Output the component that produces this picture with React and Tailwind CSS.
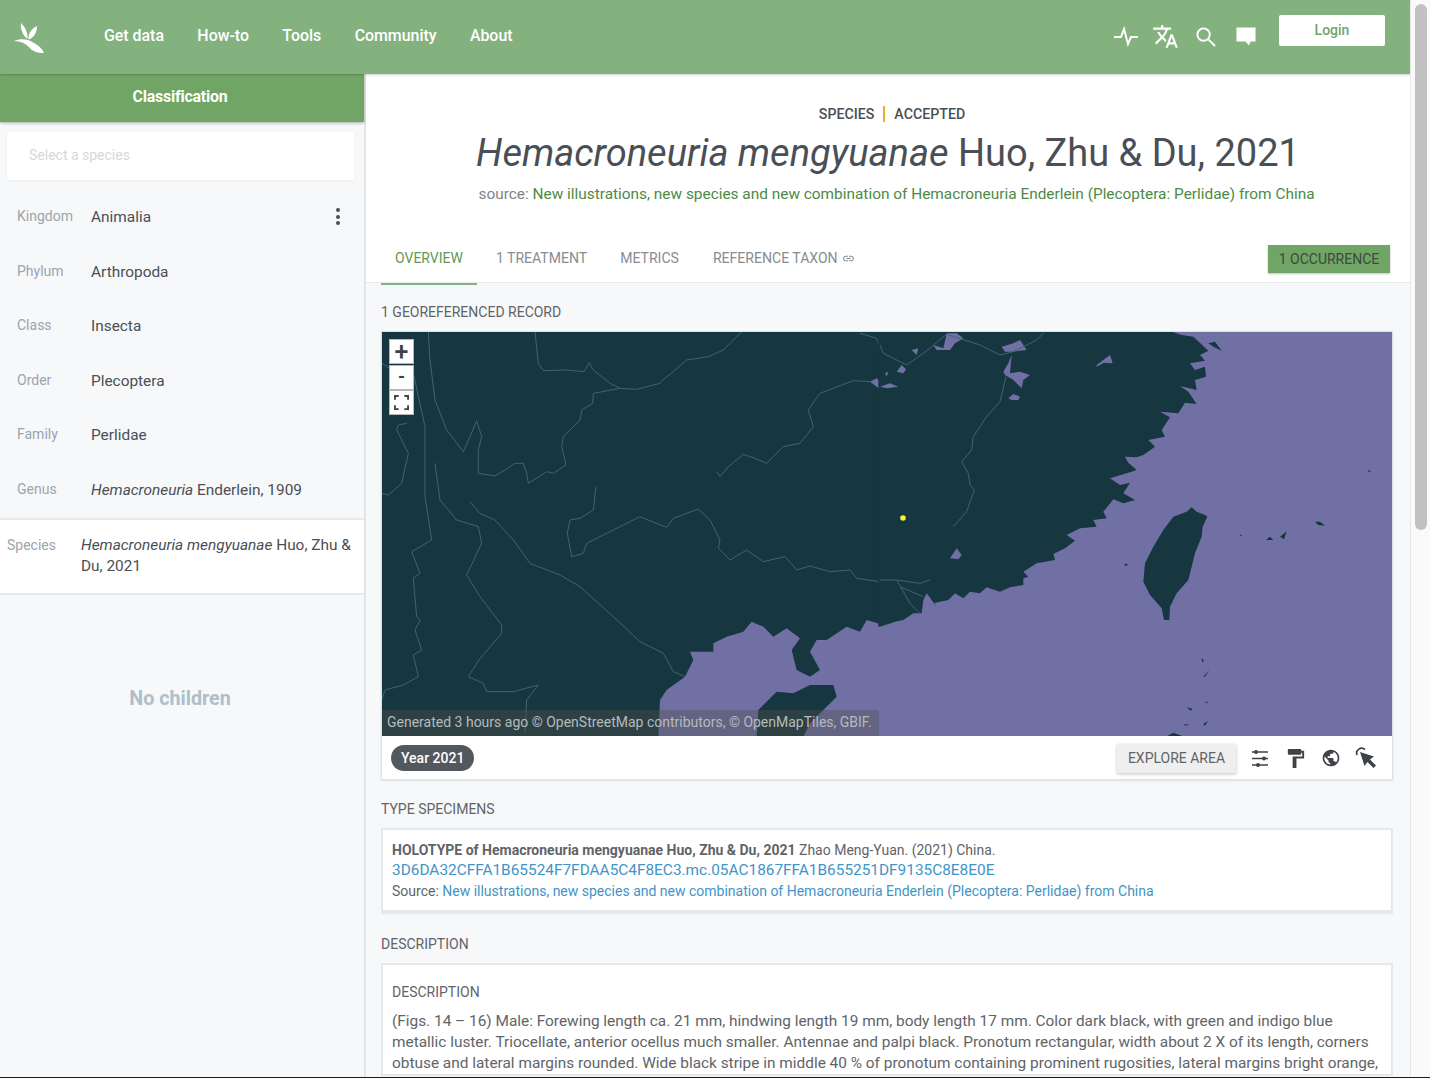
import React from 'react'
import { MdTranslate, MdLink, MdFormatPaint, MdPublic } from 'react-icons/md'

const navLinks = ['Get data', 'How-to', 'Tools', 'Community', 'About']

const ranks = [
  { rank: 'Kingdom', name: 'Animalia' },
  { rank: 'Phylum', name: 'Arthropoda' },
  { rank: 'Class', name: 'Insecta' },
  { rank: 'Order', name: 'Plecoptera' },
  { rank: 'Family', name: 'Perlidae' },
  { rank: 'Genus', italic: 'Hemacroneuria', name: ' Enderlein, 1909' },
]

const tabs = ['1 TREATMENT', 'METRICS']

// traced from the map, west half and east half have their own frames
const westRivers = [
  'M465 5 L475 100 L490 122 L560 120 L612 125 L628 98 L640 120 L690 160 L720 175 L770 178 L840 160 L848 150 L880 125 L920 90 L985 80 L1030 60 L1085 5',
  'M720 175 L640 190 L638 220 L605 240 L600 270 L550 320 L545 350 L558 405 L520 430 L500 425 L445 460 L440 430 L430 400 L405 400 L375 420 L345 438 L295 430 L295 360 L305 320 L290 272 L270 320 L250 365 L200 300 L165 210 L150 90 L145 5',
  'M1010 425 L1020 440 L1045 410 L1090 373 L1125 385 L1160 400 L1210 350 L1260 340 L1300 290 L1285 240 L1320 190 L1420 152 L1470 155',
  'M270 515 L300 550 L345 570 L400 630 L450 700 L540 735 L600 770 L700 860 L780 935 L850 970 L880 1025 L915 1040',
  'M648 470 L640 540 L600 565 L570 570 L562 610 L575 680 L610 670 L620 640 L680 610 L720 590 L780 560 L860 592 L880 565 L955 537 L990 570 L1020 630 L1015 655 L1050 690 L1100 660 L1150 695 L1215 680 L1250 720 L1290 708 L1350 725 L1410 720 L1430 745 L1500 755 L1560 750',
  'M5 490 L25 495 L65 460 L85 370 L50 300 L55 285 L80 280',
  'M100 130 L135 290 L135 500 L155 630 L95 665 L120 730 L100 745 L110 860 L120 870 L105 900 L125 960 L100 975 L115 1040 L70 1065 L15 1080 L5 1110',
  'M165 400 L180 510 L230 570 L295 590 L305 640 L260 735 L300 800 L365 885 L365 910 L300 985 L265 1040 L310 1060 L320 1085 L400 1085 L475 1065 L440 1110 L435 1210',
  'M1440 10 L1490 25 L1510 75 L1560 70',
  'M5 100 L30 115 L100 130',
]

const eastRivers = [
  'M378 140 L360 215 L320 260 L280 320 L275 360 L245 395 L265 430 L270 465 L283 480 L260 545 L220 590',
  'M0 45 L10 70 L60 95 L80 105 L150 55 L190 20 L205 10',
  'M205 15 L300 45 L360 75 L400 65 L470 30 L490 10',
  'M0 750 L50 750 L120 760 L150 750 M50 750 L90 820 L120 850 M60 770 L130 800',
]

const eastLakes = [
  'M370 125 L385 100 L395 75 L390 130 L420 125 L450 135 L430 150 L425 175 L400 150 L375 135 Z',
  'M365 50 L400 40 L420 30 L440 60 L400 65 L375 65 Z',
  'M160 45 L190 55 L200 10 L230 10 L250 25 L225 40 L210 60 L170 60 Z',
  'M95 60 L115 55 L110 75 Z',
  'M50 125 L65 105 L78 118 L70 130 Z',
  'M0 170 L30 160 L55 170 L20 175 Z',
  'M15 130 L25 125 L20 140 Z',
  'M650 105 L690 75 L698 100 L672 98 L650 110 Z',
  'M385 205 L400 192 L420 200 L415 210 L395 210 Z',
  'M210 685 L230 655 L245 675 L235 688 Z',
]

function Logo() {
  return (
    <svg viewBox="0 0 44 42" className="w-[44px] h-[42px]" fill="#fff">
      <path d="M13 8 C17 12 20 17 19.5 24 C15.5 21 12 15 13 8 Z" />
      <path d="M29 11 C29 17 26 23 20.5 24.5 C20 19 23 14 29 11 Z" />
      <path d="M6 26 C13 23 21 24 26 28 C30 30 34 33 36 38 C29 38 24 36 21 32 C17 28 12 26 6 26 Z" />
    </svg>
  )
}

function HeaderIcons() {
  return (
    <div className="flex items-center text-white">
      <svg viewBox="0 0 26 22" className="w-[26px] h-[22px]" fill="none" stroke="currentColor" strokeWidth="2">
        <path d="M1 12 H8 L11 4 L15 19 L18 12 H25" />
      </svg>
      <MdTranslate className="w-[27px] h-[27px] ml-[13px]" />
      <svg viewBox="0 0 22 22" className="w-[21px] h-[21px] ml-[16px]" fill="none" stroke="currentColor" strokeWidth="2">
        <circle cx="9" cy="9" r="6.5" />
        <path d="M14 14 L21 21" />
      </svg>
      <svg viewBox="0 0 22 22" className="w-[22px] h-[22px] ml-[19px]" fill="currentColor">
        <path d="M1.5 2.5 H20.5 V16.5 H15.5 L14 20.5 L10.5 16.5 H1.5 Z" />
      </svg>
    </div>
  )
}

function RankRow({ rank, italic, name }) {
  return (
    <div className="flex items-start h-[54.6px] pl-[17px] pr-[20px] pt-[14px]">
      <div className="w-[74px] text-[14px] leading-[22px] text-[#9aa5ad]">{rank}</div>
      <div className="flex-1 text-[15.4px] leading-[25px] text-[#4a4f55]">
        {italic && <i>{italic}</i>}
        {name}
      </div>
      {rank === 'Kingdom' && (
        <div className="flex flex-col gap-[2.5px] pt-[3px] pr-[4px]">
          <span className="w-[4px] h-[4px] rounded-full bg-[#4a4f55]" />
          <span className="w-[4px] h-[4px] rounded-full bg-[#4a4f55]" />
          <span className="w-[4px] h-[4px] rounded-full bg-[#4a4f55]" />
        </div>
      )}
    </div>
  )
}

function Sidebar() {
  return (
    <aside className="w-[366px] shrink-0 border-r-2 border-[#e2e4e6] bg-[#f7f8fa]">
      <div className="h-[48px] bg-[#70a566] shadow-[0_1px_3px_rgba(0,0,0,0.3)] flex items-center justify-center pr-[4px] pb-[2px] text-white font-bold text-[15.9px] tracking-[-0.2px]">
        Classification
      </div>
      <div className="pt-[10px] pl-[7px] pr-[10px]">
        <div className="h-[48px] bg-white shadow-[0_1px_2px_rgba(0,0,0,0.06)] pl-[22px] pb-[2px] flex items-center text-[14px] text-[#d5d8db]">
          Select a species
        </div>
      </div>
      <div className="pt-[11px]">
        {ranks.map((r) => (
          <RankRow key={r.rank} {...r} />
        ))}
      </div>
      <div className="flex items-start bg-white border-y-2 border-[#e6e8eb] h-[77px] pl-[7px] pr-[10px] pt-[15px] -mt-[1px]">
        <div className="w-[74px] text-[14px] leading-[20px] text-[#9aa5ad]">Species</div>
        <div className="flex-1 text-[15.4px] leading-[21px] text-[#4a4f55]">
          <i>Hemacroneuria mengyuanae</i> Huo, Zhu & Du, 2021
        </div>
      </div>
      <div className="pt-[89px] pr-[4px] text-center text-[19.7px] font-bold text-[#aebfca]">No children</div>
    </aside>
  )
}

function MapView() {
  return (
    <div className="relative h-[404px] bg-[#7070a5] overflow-hidden">
      <svg viewBox="382 332 1010 404" className="block w-full h-[404px]">
        {/* west half */}
        <g transform="translate(380 330) scale(0.33333)">
          <path
            fill="#16373f"
            d="M0 0 H1510 V885 L1460 870 L1440 905 L1400 890 L1340 930 L1310 930 L1290 965 L1320 1020 L1290 1040 L1250 1020 L1235 960 L1260 925 L1220 895 L1180 920 L1150 890 L1115 875 L1090 905 L1040 920 L1000 940 L1000 965 L930 965 L940 990 L915 1040 L860 1080 L840 1110 L835 1220 H0 Z"
          />
          <path fill="#16373f" d="M1130 1220 L1135 1140 L1190 1085 L1240 1090 L1290 1065 L1360 1065 L1370 1100 L1330 1140 L1290 1180 L1270 1220 Z" />
          <path fill="#7070a5" d="M1470 155 L1490 145 L1510 165 L1530 160 L1500 178 Z M1515 130 L1528 125 L1525 145 Z" />
          <g fill="none" stroke="#3d6570" strokeWidth="1">
            {westRivers.map((d) => (
              <path key={d} d={d} vectorEffect="non-scaling-stroke" />
            ))}
          </g>
        </g>
        {/* east half, coast and Taiwan */}
        <g transform="translate(880 330) scale(0.33333)">
          <path
            fill="#16373f"
            d="M-5 5 H875 L905 15 L940 20 L985 62 L960 75 L975 92 L930 100 L945 120 L975 110 L978 140 L945 150 L950 180 L900 168 L925 185 L950 222 L915 218 L895 250 L840 245 L870 262 L845 300 L855 320 L805 330 L825 350 L790 375 L770 382 L735 380 L745 398 L770 420 L745 428 L690 445 L720 465 L750 458 L730 490 L765 510 L730 520 L700 508 L670 545 L680 565 L640 570 L650 590 L600 595 L560 615 L585 632 L555 655 L520 672 L525 690 L470 700 L430 725 L445 740 L430 745 L430 765 L390 772 L360 785 L320 772 L300 790 L270 785 L250 805 L225 790 L205 810 L160 820 L170 830 L140 790 L130 810 L125 850 L100 850 L70 870 L45 875 L0 890 L-5 890 Z"
          />
          <path
            fill="#16373f"
            d="M935 532 L950 545 L975 555 L982 560 L968 590 L965 620 L945 670 L925 750 L890 790 L870 830 L868 870 L852 870 L845 835 L810 795 L790 755 L795 700 L820 650 L850 600 L880 560 L920 545 Z"
          />
          <path
            fill="#16373f"
            d="M1158 630 L1170 620 L1180 630 Z M1200 620 L1220 604 L1212 628 Z M1305 575 L1320 575 L1335 587 L1315 585 Z M1080 614 L1088 616 L1080 618 Z M735 700 L745 705 L735 708 Z M965 985 L972 990 L967 998 Z M970 1040 L988 1020 L975 1040 Z M975 1115 L985 1116 L980 1120 Z M920 1132 L938 1136 L932 1142 Z M905 1158 L910 1168 Z M912 1183 L930 1184 L915 1187 Z M970 1182 L984 1172 L975 1188 Z M858 1220 L880 1208 L912 1220 Z M1462 420 L1474 424 L1466 426 Z M985 40 L1005 35 L1025 62 L1000 50 Z"
          />
          <g fill="#7070a5">
            {eastLakes.map((d) => (
              <path key={d} d={d} />
            ))}
          </g>
          <g fill="none" stroke="#3d6570" strokeWidth="1">
            {eastRivers.map((d) => (
              <path key={d} d={d} vectorEffect="non-scaling-stroke" />
            ))}
          </g>
        </g>
        <circle cx="903" cy="518" r="2.8" fill="#f4f435" />
      </svg>
      <div className="absolute left-[7px] top-[7px] flex flex-col gap-[0.5px]">
        <div className="w-[25px] h-[25px] bg-white border border-[#b4b8ba] flex items-center justify-center text-[25px] font-medium leading-none text-[#3f4347]">+</div>
        <div className="w-[25px] h-[25px] bg-white border border-[#b4b8ba] flex items-center justify-center text-[18px] font-bold leading-none text-[#3f4347]">-</div>
        <div className="w-[25px] h-[25px] bg-white border border-[#b4b8ba] flex items-center justify-center">
          <svg viewBox="0 0 16 16" className="w-[15px] h-[15px]" fill="none" stroke="#3f4347" strokeWidth="2">
            <path d="M1 5 V1 H5 M11 1 H15 V5 M15 11 V15 H11 M5 15 H1 V11" />
          </svg>
        </div>
      </div>
      <div className="absolute left-0 bottom-0 h-[26px] w-[497px] bg-[rgba(80,80,80,0.4)] pl-[5px] text-[14px] leading-[24px] text-[#b4bbbd] whitespace-nowrap">
        Generated 3 hours ago © OpenStreetMap contributors, © OpenMapTiles, GBIF.
      </div>
    </div>
  )
}

function MapTools() {
  return (
    <div className="flex items-center gap-[14px] mr-[15px] text-[#3f4347]">
      <svg viewBox="0 0 18 18" className="w-[18px] h-[18px] mr-[1px]" fill="currentColor" stroke="currentColor">
        <path d="M1 3 H17 M1 9.5 H17 M1 16 H17" fill="none" strokeWidth="1.5" />
        <circle cx="5" cy="3" r="2" stroke="none" />
        <circle cx="13" cy="9.5" r="2" stroke="none" />
        <circle cx="7" cy="16" r="2" stroke="none" />
      </svg>
      <MdFormatPaint className="w-[23px] h-[23px]" />
      <MdPublic className="w-[20px] h-[20px]" />
      <svg viewBox="0 0 22 22" className="w-[22px] h-[22px]" fill="currentColor">
        <path d="M2 8 A5 5 0 0 1 10 2.5" fill="none" stroke="currentColor" strokeWidth="1.7" />
        <path d="M5 5 L19 9.5 L15 12.5 L21 18.5 L18.5 21 L12.5 15 L9.5 19 Z" />
      </svg>
    </div>
  )
}

function Main() {
  return (
    <main className="flex-1 bg-[#f7f8fa] overflow-hidden">
      <div className="bg-white h-[209px] border-b border-[#e6e8eb] flex flex-col">
        <div className="pt-[31px] ml-[8px] flex items-center justify-center text-[14.2px] font-medium leading-[18px] text-[#4a4f55]">
          <span>SPECIES</span>
          <span className="w-[2px] h-[16px] bg-[#f0ad2e] mx-[9px]" />
          <span>ACCEPTED</span>
        </div>
        <h1 className="text-center text-[38px] leading-[52px] mt-[4px] text-[#4a4f55] whitespace-nowrap">
          <i>Hemacroneuria mengyuanae</i> Huo, Zhu & Du, 2021
        </h1>
        <p className="text-center text-[15.4px] leading-[22px] mt-[4px] ml-[17px] text-[#7d8388] whitespace-nowrap">
          source: <span className="text-[#4c8a45]">New illustrations, new species and new combination of Hemacroneuria Enderlein (Plecoptera: Perlidae) from China</span>
        </p>
        <div className="mt-auto flex items-end pl-[15px] pr-[20px]">
          <div className="border-b-2 border-[#84b27f] text-[#5f9a58] text-[14px] leading-[20px] px-[14px] pb-[15px] -mb-[3px]">OVERVIEW</div>
          {tabs.map((t) => (
            <div key={t} className="text-[#858d94] text-[14.05px] leading-[20px] ml-[19px] mr-[14px] pb-[14px]">{t}</div>
          ))}
          <div className="flex items-center gap-[4px] text-[#858d94] text-[14.05px] leading-[20px] ml-[20px] pb-[14px]">
            REFERENCE TAXON <MdLink className="w-[13px] h-[13px]" />
          </div>
          <div className="ml-auto mb-[9px] h-[28px] w-[122px] flex items-center justify-center bg-[#70a566] text-[#3d4a3c] text-[14px] shadow-[0_1px_2px_rgba(0,0,0,0.25)]">
            1 OCCURRENCE
          </div>
        </div>
      </div>

      <div className="pl-[15px] pr-[17px]">
        <h3 className="pt-[19px] text-[14px] leading-[20px] text-[#5f6468]">1 GEOREFERENCED RECORD</h3>
        <div className="mt-[9px] bg-white border border-[#dfe2e5] shadow-[0_1px_2px_rgba(0,0,0,0.1)]">
          <MapView />
          <div className="h-[43px] pt-[1px] flex items-center justify-between pl-[9px]">
            <span className="h-[26px] px-[10px] rounded-full bg-[#53585e] text-white text-[14px] font-medium leading-[26px]">Year 2021</span>
            <div className="flex items-center gap-[15px]">
              <span className="h-[29px] w-[119px] flex items-center justify-center bg-[#efefef] text-[14px] text-[#5f6468] shadow-[0_1px_3px_rgba(0,0,0,0.25)]">EXPLORE AREA</span>
              <MapTools />
            </div>
          </div>
        </div>

        <h3 className="pt-[19px] text-[14px] leading-[20px] text-[#5f6468]">TYPE SPECIMENS</h3>
        <div className="mt-[9px] bg-white border-2 border-[#e6e8eb] border-b-4 h-[86px] pl-[9px] pt-[10px] text-[14px] leading-[20.25px] text-[#5f6468] whitespace-nowrap">
          <div><b>HOLOTYPE of Hemacroneuria mengyuanae Huo, Zhu & Du, 2021</b> Zhao Meng-Yuan. (2021) China.</div>
          <div className="text-[15.4px] text-[#3f94c8]">3D6DA32CFFA1B65524F7FDAA5C4F8EC3.mc.05AC1867FFA1B655251DF9135C8E8E0E</div>
          <div>Source: <span className="text-[#3f94c8]">New illustrations, new species and new combination of Hemacroneuria Enderlein (Plecoptera: Perlidae) from China</span></div>
        </div>

        <h3 className="pt-[20px] text-[14px] leading-[20px] text-[#5f6468]">DESCRIPTION</h3>
        <div className="mt-[9px] bg-white border-2 border-[#e6e8eb] pl-[9px] pr-[10px] pt-[16px] text-[#5f6468]">
          <div className="text-[14px] leading-[22px]">DESCRIPTION</div>
          <p className="mt-[8px] text-[15.4px] leading-[21px]">
            (Figs. 14 – 16) Male: Forewing length ca. 21 mm, hindwing length 19 mm, body length 17 mm. Color dark black, with green and indigo blue metallic luster. Triocellate, anterior ocellus much smaller. Antennae and palpi black. Pronotum rectangular, width about 2 X of its length, corners obtuse and lateral margins rounded. Wide black stripe in middle 40 % of pronotum containing prominent rugosities, lateral margins bright orange,
          </p>
        </div>
      </div>
    </main>
  )
}

export default function App() {
  return (
    <div className="relative h-[1078px] overflow-hidden flex bg-white font-['Roboto',sans-serif]">
      <div className="w-[1410px] shrink-0 flex flex-col h-[1077px] overflow-hidden">
        <header className="h-[74px] shrink-0 bg-[#84b27f] flex items-center pb-[2px] shadow-[0_1px_2px_rgba(0,0,0,0.2)] relative z-10">
          <div className="pl-[8px] pr-[52px]">
            <Logo />
          </div>
          <nav className="flex items-center gap-[33.4px] text-white text-[15.9px] font-medium">
            {navLinks.map((l) => (
              <span key={l}>{l}</span>
            ))}
          </nav>
          <div className="ml-auto flex items-center gap-[22px] pr-[25px]">
            <HeaderIcons />
            <button className="w-[106px] h-[31px] mb-[12px] bg-white rounded-[2px] text-[14px] font-medium text-[#70a566]">Login</button>
          </div>
        </header>
        <div className="flex flex-1 min-h-0">
          <Sidebar />
          <Main />
        </div>
      </div>
      <div className="flex-1 h-[1077px] bg-[#fafafa] border-l border-[#e8e8e8] pl-[4px] pt-[4px]">
        <div className="w-[12px] h-[526px] rounded-full bg-[#c1c1c1]" />
      </div>
      <div className="absolute left-0 right-0 bottom-0 h-[1px] bg-[#1a1a1a]" />
    </div>
  )
}
